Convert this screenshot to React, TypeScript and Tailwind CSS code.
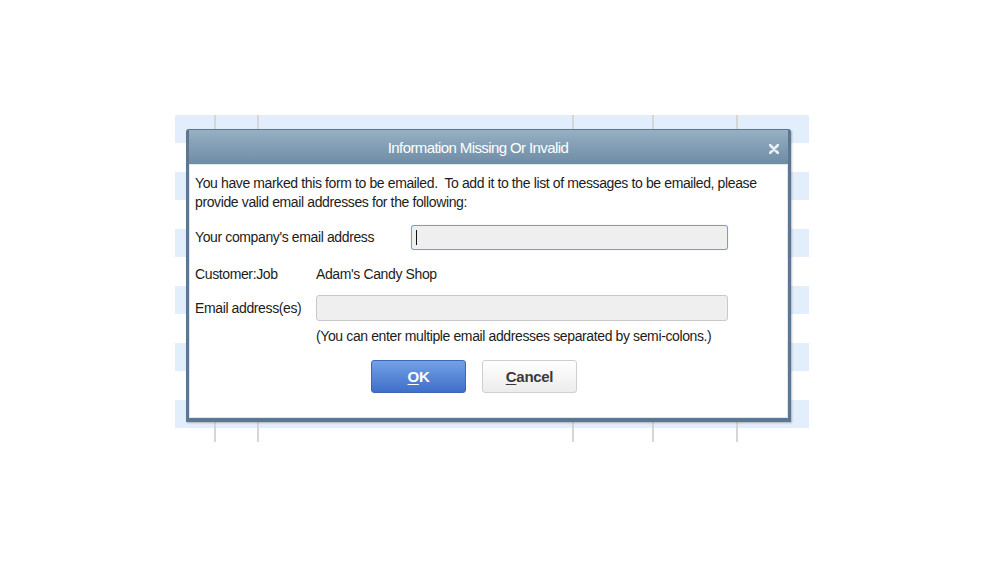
const narrow = { fontFamily: '"Liberation Sans Narrow", "Arial Narrow", "Liberation Sans", Arial, sans-serif' };

function BackgroundGrid() {
  const bands = [0, 1, 2, 3, 4, 5];
  const lines = ["left-[39px]", "left-[82px]", "left-[397px]", "left-[477px]", "left-[561px]"];
  return (
    <div className="relative w-[634px]">
      <div className="flex flex-col gap-[29px] pb-[14px]">
        {bands.map((b) => (
          <div key={b} className="h-[28px] bg-[#e3eefc]" />
        ))}
      </div>
      {lines.map((l) => (
        <div key={l} className={`absolute top-0 bottom-0 w-[2px] bg-[#d6d6d6] ${l}`} />
      ))}
    </div>
  );
}

function CloseIcon() {
  return (
    <svg width="10" height="10" viewBox="0 0 10 10" className="block">
      <path d="M1 1 L9 9 M9 1 L1 9" stroke="#e9eef3" strokeWidth="2.6" strokeLinecap="round" />
    </svg>
  );
}

function Dialog() {
  return (
    <div
      className="absolute left-[186px] top-[129px] flex h-[293px] w-[605px] flex-col rounded-t-[3px] border-x-[3px] border-b-[4px] border-t border-[#5c778f] bg-white shadow-[1px_1px_2px_rgba(0,0,0,0.25)]"
      style={narrow}
    >
      <div className="relative flex h-[34px] items-center justify-center bg-gradient-to-b from-[#96b0c3] to-[#6e8ca5] pr-[21px] pt-[2px]">
        <span className="text-[15px] tracking-[-0.6px] text-white">Information Missing Or Invalid</span>
        <div className="absolute right-[9px] top-[14px]">
          <CloseIcon />
        </div>
      </div>
      <div className="flex flex-1 flex-col border border-[#dfe6ec] px-[5px] pt-[9px] text-[14px] leading-[19px] tracking-[-0.38px] text-[#1c1c1c]">
        <p className="whitespace-nowrap">
          You have marked this form to be emailed.&nbsp; To add it to the list of messages to be emailed, please
          <br />
          provide valid email addresses for the following:
        </p>
        <div className="mt-[13px] flex items-center">
          <span className="w-[216px]">Your company's email address</span>
          <div className="flex h-[25px] w-[317px] items-center rounded-[3px] border border-[#6f9fe0] bg-[#efefef] pl-[4px] shadow-[0_0_1px_#9cc0ee]">
            <div className="h-[15px] w-[1px] bg-[#111]" />
          </div>
        </div>
        <div className="mt-[15px] flex items-center">
          <span className="w-[121px]">Customer:Job</span>
          <span>Adam's Candy Shop</span>
        </div>
        <div className="mt-[11px] flex items-center">
          <span className="w-[121px]">Email address(es)</span>
          <div className="h-[26px] w-[412px] rounded-[3px] border border-[#c9c9c9] bg-[#efefef]" />
        </div>
        <p className="mt-[6px] pl-[121px]">(You can enter multiple email addresses separated by semi-colons.)</p>
        <div className="mt-[14px] flex gap-[16px] pl-[176px]">
          <button className="flex h-[33px] w-[95px] items-center justify-center rounded-[3px] border border-[#3c67b5] bg-gradient-to-b from-[#74a0e6] to-[#3f6fca] text-[15px] font-bold tracking-[-0.3px] text-white">
            <span><span className="underline underline-offset-2">O</span>K</span>
          </button>
          <button className="flex h-[33px] w-[95px] items-center justify-center rounded-[3px] border border-[#cfcfcf] bg-gradient-to-b from-[#ffffff] to-[#ececec] text-[15px] font-bold tracking-[-0.3px] text-[#3a3a3a]">
            <span><span className="underline underline-offset-2">C</span>ancel</span>
          </button>
        </div>
      </div>
    </div>
  );
}

export default function App() {
  return (
    <div className="relative h-[562px] w-[999px] overflow-hidden bg-white">
      <div className="pl-[175px] pt-[115px]">
        <BackgroundGrid />
      </div>
      <Dialog />
    </div>
  );
}
